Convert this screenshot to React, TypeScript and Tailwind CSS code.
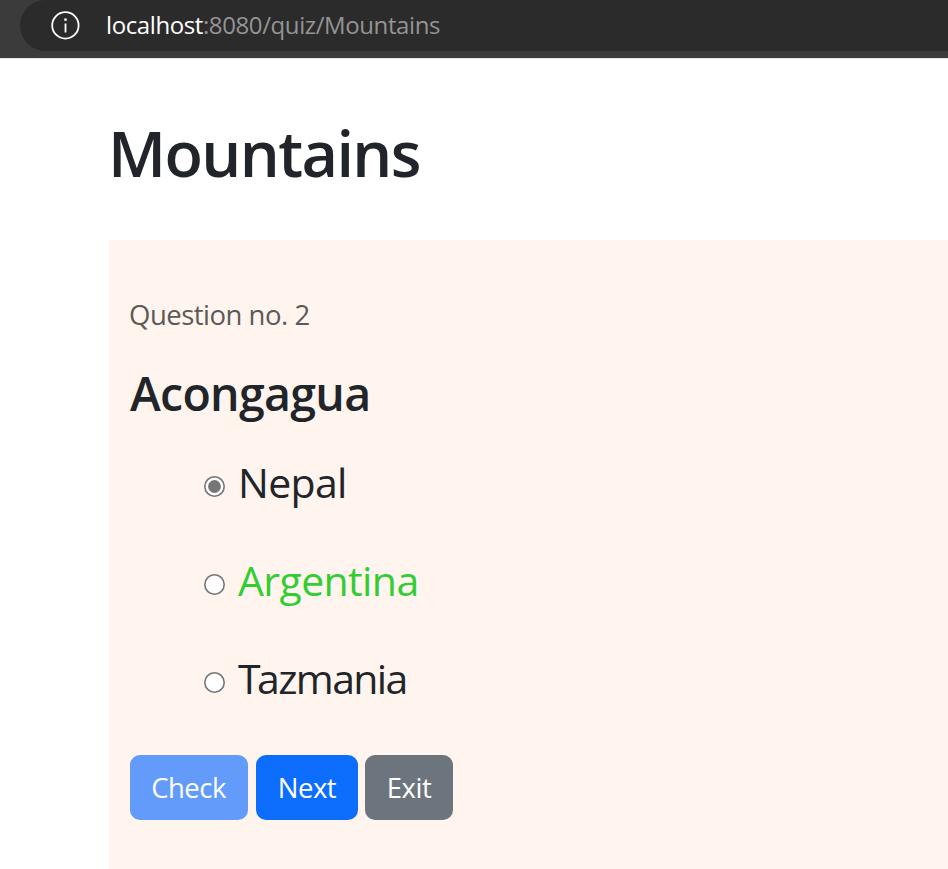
const options = [
  { name: "Nepal", checked: true, style: "text-[#212529] tracking-[-0.7px]" },
  { name: "Argentina", checked: false, style: "text-[#32cd32] tracking-[-0.6px]" },
  { name: "Tazmania", checked: false, style: "text-[#212529] tracking-[-1.6px] first-letter:tracking-[-3.6px]" },
];

function Radio({ checked }: { checked: boolean }) {
  return (
    <svg className="mt-[8px] size-[21px] shrink-0" viewBox="0 0 21 21">
      <circle cx="10.5" cy="10.5" r="9.7" fill="white" stroke="#767676" strokeWidth="1.6" />
      {checked && <circle cx="10.5" cy="10.5" r="6.4" fill="#767676" />}
    </svg>
  );
}

export default function App() {
  return (
    <div className="flex h-[869px] w-[948px] flex-col overflow-hidden bg-white font-['Open_Sans','Noto_Sans',sans-serif] text-[#212529]">
      <header className="h-[59px] shrink-0 border-b border-[#e4e4e4] bg-[#3b3b3b] pl-5">
        <div className="flex h-[51px] items-center rounded-l-full bg-[#2b2b2b] pl-[31px]">
          <svg className="size-[29px]" viewBox="0 0 29 29" fill="none">
            <circle cx="14.4" cy="14.4" r="13.2" stroke="white" strokeWidth="1.8" />
            <path d="M14.5 12.5V21.5" stroke="white" strokeWidth="1.8" />
            <circle cx="14.5" cy="8.7" r="1.4" fill="white" />
          </svg>
          <p className="mb-[2px] ml-[26px] whitespace-nowrap text-[24px] leading-[49px] text-[#949494]">
            <span className="tracking-[-0.4px] text-white">localhost</span>
            <span className="tracking-[-0.4px]">:8080/quiz/Mountains</span>
          </p>
        </div>
      </header>
      <main className="flex grow flex-col pl-[109px]">
        <h1 className="-ml-px mt-[56px] whitespace-nowrap text-[63px] font-semibold leading-[76px] tracking-[-1.6px]">
          Mountains
        </h1>
        <section className="mt-[49px] grow bg-[#fff4ee] pl-[21px] pt-[54px]">
          <p className="-ml-px whitespace-nowrap text-[27.5px] leading-[42px] tracking-[-0.5px] text-[#5c5a59]">Question no. 2</p>
          <h2 className="mt-[29px] whitespace-nowrap text-[46.5px] font-semibold leading-[56px] tracking-[-0.7px]">Acongagua</h2>
          <ul className="mt-[12px] pl-[74px]">
            {options.map((o) => (
              <li key={o.name} className="flex h-[98px] items-center gap-[13px]">
                <Radio checked={o.checked} />
                <span className={`block whitespace-nowrap text-[41px] leading-[56px] ${o.style}`}>{o.name}</span>
              </li>
            ))}
          </ul>
          <div className="mt-[28px] flex text-[27.5px] leading-[65px] text-white">
            <button className="h-[65px] w-[118px] rounded-[10px] bg-[#629bf9] pr-px tracking-[-0.5px]">Check</button>
            <button className="ml-2 h-[65px] w-[102px] rounded-[10px] bg-[#0d6efd] tracking-[-0.5px]">Next</button>
            <button className="ml-[7px] h-[65px] w-[88px] rounded-[10px] bg-[#6c757d] tracking-[-0.5px]">Exit</button>
          </div>
        </section>
      </main>
    </div>
  );
}
